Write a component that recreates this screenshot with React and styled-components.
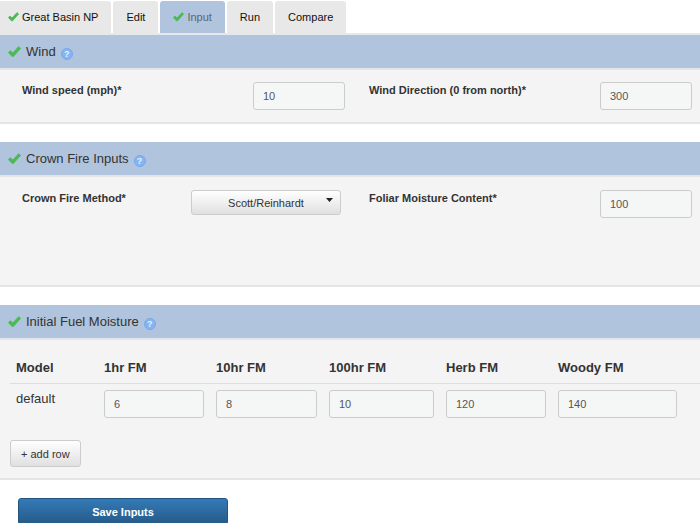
import React from "react";
import styled, { createGlobalStyle } from "styled-components";

const GlobalStyle = createGlobalStyle`
  *, *::before, *::after { box-sizing: border-box; }
  body {
    margin: 0;
    background: #fff;
    color: #333;
    font-family: "Liberation Sans", Arial, sans-serif;
    font-size: 13px;
    line-height: 18px;
  }
  button, input, select { font: inherit; color: inherit; margin: 0; }
`;

const Page = styled.form`
  display: flex;
  flex-direction: column;
`;

const Tabs = styled.nav`
  display: flex;
  gap: 2px;
  padding-top: 1px;
  border-bottom: 2px solid #e6e8ec;
`;

const Tab = styled.button`
  display: flex;
  align-items: center;
  gap: 3px;
  height: 32px;
  padding: 0 13px;
  border: 0;
  border-radius: 3px 3px 0 0;
  background: ${(p) => (p.$active ? "#b0c4de" : "#e8e8e8")};
  color: ${(p) => (p.$active ? "#5c6672" : "#111")};
  font-size: 11px;

  &:first-child { padding-left: 8px; border-top-left-radius: 0; }
`;

const Section = styled.section`
  margin-bottom: 18px;
  background: #f4f4f4;
  border-bottom: 2px solid #e5e5e5;
`;

const SectionHeader = styled.header`
  display: flex;
  align-items: center;
  gap: 5px;
  height: 35px;
  padding-left: 8px;
  background: #b0c4de;
  border-bottom: 2px solid #e3e5e8;
`;

const Title = styled.h2`
  margin: 0;
  font-size: 13px;
  font-weight: 500;
`;

const HelpButton = styled.button`
  display: grid;
  place-items: center;
  width: 12px;
  height: 12px;
  margin-top: 4px;
  padding: 0;
  border: 1px solid #78a9ea;
  border-radius: 50%;
  background: #84b4f2;
  color: #e8f2ff;
  font-size: 9px;
  font-weight: 700;
  line-height: 10px;
`;

const CheckSvg = styled.svg`
  flex: none;
  width: ${(p) => p.$width}px;
  height: auto;
  fill: #4cba54;
  stroke: #4cba54;
  stroke-linejoin: round;
`;

const FieldGrid = styled.div`
  display: grid;
  grid-template-columns: 1fr 1fr;
  column-gap: 24px;
  padding: ${(p) => (p.$roomy ? "13px 8px 67px 22px" : "12px 8px 12px 22px")};
`;

const Field = styled.div`
  display: flex;
  align-items: flex-start;
  justify-content: space-between;
`;

const Label = styled.label`
  font-size: 11px;
  font-weight: 700;
  line-height: 16px;
`;

const TextInput = styled.input`
  width: ${(p) => (p.$fill ? "100%" : "92px")};
  height: 28px;
  padding: 0 9px;
  border: 1px solid #ccc;
  border-radius: 3px;
  background: #f5f7f7;
  color: #555;
  font-size: 11px;
`;

const SelectWrap = styled.div`
  position: relative;
  width: 150px;
  margin-right: 4px;
`;

const Select = styled.select`
  appearance: none;
  display: block;
  width: 100%;
  height: 25px;
  padding: 1px 16px 0;
  border: 1px solid #ccc;
  border-radius: 3px;
  background: linear-gradient(#fff, #e0e0e0);
  font-size: 11px;
  text-align: center;
  text-align-last: center;
`;

const Caret = styled.svg`
  position: absolute;
  top: 8px;
  right: 8px;
  width: 7px;
  height: 4px;
  fill: #222;
  pointer-events: none;
`;

const FuelBody = styled.div`
  padding: 17px 0 11px 10px;
`;

const FuelTable = styled.table`
  width: 100%;
  table-layout: fixed;
  border-collapse: collapse;
`;

const Col = styled.col`
  width: ${(p) => p.$width}px;
`;

const HeadCell = styled.th`
  height: 26px;
  padding: 2px 6px 6px;
  border-bottom: 1px solid #ddd;
  text-align: left;
  white-space: nowrap;
`;

const Cell = styled.td`
  padding: 6px;
  vertical-align: top;

  &:last-child { padding-right: 23px; }
`;

const RowHead = styled.th`
  padding: 6px;
  font-weight: 400;
  text-align: left;
  vertical-align: top;
`;

const AddRow = styled.button`
  height: 27px;
  margin-top: 16px;
  padding: 0 10px;
  border: 1px solid #ccc;
  border-radius: 3px;
  background: linear-gradient(#fff, #e0e0e0);
  font-size: 11px;
`;

const SaveButton = styled.button`
  width: 210px;
  height: 27px;
  margin-left: 18px;
  padding: 0;
  border: 1px solid #245580;
  border-radius: 3px;
  background: linear-gradient(#337ab7, #265a88);
  color: #fff;
  font-size: 11px;
  font-weight: 700;
`;

function Check({ width = 13 }) {
  return (
    <CheckSvg $width={width} viewBox="0 0 13 12" aria-hidden="true">
      <path d="M2.3 4.8 4.8 7.1 10.7.7 12.5 2.4 5.2 10.6 4.3 10.6.5 6.6Z" />
    </CheckSvg>
  );
}

function Panel({ title, children }) {
  return (
    <Section>
      <SectionHeader>
        <Check />
        <Title>{title}</Title>
        <HelpButton type="button" aria-label={`Help: ${title}`}>?</HelpButton>
      </SectionHeader>
      {children}
    </Section>
  );
}

function NumberField({ id, label, value }) {
  return (
    <Field>
      <Label htmlFor={id}>{label}</Label>
      <TextInput id={id} defaultValue={value} />
    </Field>
  );
}

const tabs = [
  { name: "Great Basin NP", done: true },
  { name: "Edit" },
  { name: "Input", done: true, active: true },
  { name: "Run" },
  { name: "Compare" },
];

const fuels = [
  { name: "1hr FM", value: "6", width: 112 },
  { name: "10hr FM", value: "8", width: 113 },
  { name: "100hr FM", value: "10", width: 117 },
  { name: "Herb FM", value: "120", width: 112 },
  { name: "Woody FM", value: "140", width: 148 },
];

export default function App() {
  return (
    <>
      <GlobalStyle />
      <Page onSubmit={(e) => e.preventDefault()}>
        <Tabs>
          {tabs.map((t) => (
            <Tab key={t.name} type="button" $active={t.active} aria-current={t.active ? "page" : undefined}>
              {t.done && <Check width={11} />}
              {t.name}
            </Tab>
          ))}
        </Tabs>

        <Panel title="Wind">
          <FieldGrid>
            <NumberField id="speed" label="Wind speed (mph)*" value="10" />
            <NumberField id="direction" label="Wind Direction (0 from north)*" value="300" />
          </FieldGrid>
        </Panel>

        <Panel title="Crown Fire Inputs">
          <FieldGrid $roomy>
            <Field>
              <Label htmlFor="method">Crown Fire Method*</Label>
              <SelectWrap>
                <Select id="method">
                  <option>Scott/Reinhardt</option>
                </Select>
                <Caret viewBox="0 0 7 4" aria-hidden="true">
                  <path d="M0 0h7L3.5 4Z" />
                </Caret>
              </SelectWrap>
            </Field>
            <NumberField id="foliar" label="Foliar Moisture Content*" value="100" />
          </FieldGrid>
        </Panel>

        <Panel title="Initial Fuel Moisture">
          <FuelBody>
            <FuelTable>
              <colgroup>
                <Col $width={88} />
                {fuels.map((f) => <Col key={f.name} $width={f.width} />)}
              </colgroup>
              <thead>
                <tr>
                  <HeadCell scope="col">Model</HeadCell>
                  {fuels.map((f) => <HeadCell key={f.name} scope="col">{f.name}</HeadCell>)}
                </tr>
              </thead>
              <tbody>
                <tr>
                  <RowHead scope="row">default</RowHead>
                  {fuels.map((f) => (
                    <Cell key={f.name}>
                      <TextInput $fill aria-label={`${f.name}, default`} defaultValue={f.value} />
                    </Cell>
                  ))}
                </tr>
              </tbody>
            </FuelTable>
            <AddRow type="button">+ add row</AddRow>
          </FuelBody>
        </Panel>

        <SaveButton type="submit">Save Inputs</SaveButton>
      </Page>
    </>
  );
}
